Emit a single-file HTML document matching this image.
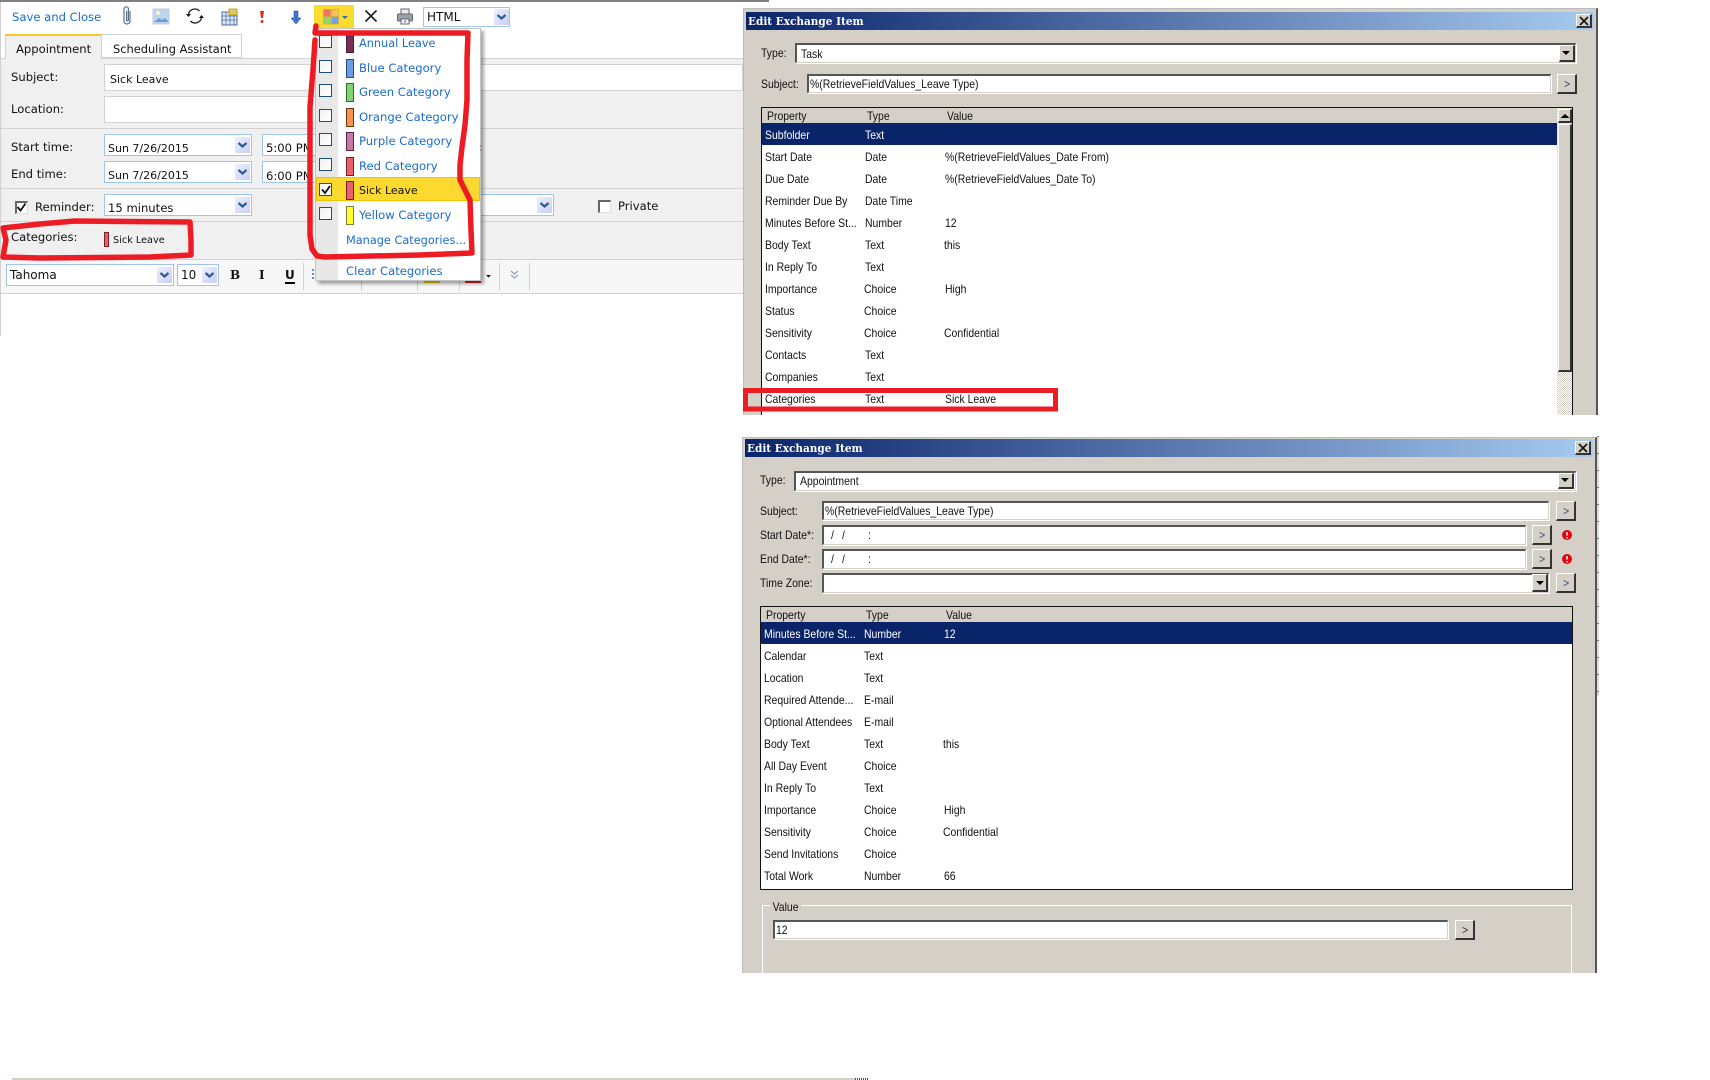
<!DOCTYPE html>
<html><head><meta charset="utf-8"><title>Edit Exchange Item</title>
<style>
html,body{margin:0;padding:0;background:#fff;width:1710px;height:1080px;overflow:hidden}
div,span{position:absolute;box-sizing:border-box}
.o{font:11px/14px "DejaVu Sans","Liberation Sans",sans-serif;color:#111;white-space:nowrap}
.m{font-size:11.6px}
.b{color:#1a6ccc}
.d{font:12px/14px "Liberation Sans",sans-serif;color:#111;white-space:nowrap;transform:scaleX(.87);transform-origin:0 50%}
.w{color:#fff}
.l{background:#d2d2d2;height:1px;left:1px;width:742px}
.c{background:#fff;border:1px solid #9fc5ea}
.cb{background:linear-gradient(135deg,#eef0fd,#c9cef5)}
.in{background:#fff;border-top:2px solid #555;border-left:2px solid #555;border-bottom:1px solid #d4d0c8;border-right:1px solid #d4d0c8;box-shadow:1px 1px 0 #fff}
.btn{background:#d4d0c8;border-top:1px solid #fff;border-left:1px solid #fff;border-right:2px solid #333;border-bottom:2px solid #333}
.dlg{background:#d4d0c8;border-left:1px solid #bbb;border-right:2px solid #555;border-top:1px solid #bbb}
.tb{height:18px;background:linear-gradient(90deg,#0a246a,#a6caf0)}
.tt{font:bold 11.4px/14px "DejaVu Serif","Liberation Serif",serif;color:#fff;white-space:nowrap;transform:scaleX(.92);transform-origin:0 50%}
.cbx{width:13px;height:13px;left:319px;border:1px solid #1f4e79;background:linear-gradient(135deg,#f2f2f2,#fff)}
.sw{left:346px;width:8px;height:19px;border:1px solid}
</style></head><body>

<!-- Outlook form -->
<div style="left:0;top:0;width:769px;height:2px;background:#808080"></div>
<div style="left:0;top:2px;width:1px;height:334px;background:#d0d0d0"></div>
<div style="left:1px;top:59px;width:742px;height:200px;background:#f0f0f0"></div>
<div style="left:1px;top:259px;width:742px;height:34px;background:#f7f7f7"></div>
<div class="l" style="top:58px"></div><div class="l" style="top:128px"></div><div class="l" style="top:188px"></div>
<div class="l" style="top:221px"></div><div class="l" style="top:259px"></div><div class="l" style="top:293px"></div>

<span class="o b m" style="left:12px;top:10px">Save and Close</span>

<div style="left:314px;top:5px;width:40px;height:23px;background:#fbdc2e"></div>

<div class="c" style="left:423px;top:7px;width:87px;height:20px"></div>
<div class="cb" style="left:494px;top:9px;width:15px;height:16px"></div>
<span class="o" style="left:427px;top:10px;font-size:12px">HTML</span>

<!-- tabs -->
<div style="left:5px;top:34px;width:97px;height:25px;background:#f0f0f0;border:1px solid #d2d2d2;border-top:2px solid #fbc72a;border-bottom:0"></div>
<div style="left:102px;top:34px;width:140px;height:24px;background:#fff;border:1px solid #d2d2d2;border-left:0"></div>
<span class="o m" style="left:16px;top:42px">Appointment</span>
<span class="o" style="left:113px;top:42px;font-size:11.4px">Scheduling Assistant</span>

<span class="o m" style="left:11px;top:70px">Subject:</span>
<div style="left:104px;top:64px;width:639px;height:27px;background:#fff;border:1px solid #d2d2d2"></div>
<span class="o" style="left:110px;top:73px">Sick Leave</span>
<span class="o m" style="left:11px;top:102px">Location:</span>
<div style="left:104px;top:96px;width:215px;height:27px;background:#fff;border:1px solid #d2d2d2"></div>

<span class="o m" style="left:11px;top:140px">Start time:</span>
<div class="c" style="left:104px;top:134px;width:148px;height:22px"></div>
<div class="cb" style="left:235px;top:137px;width:15px;height:16px"></div>
<span class="o" style="left:108px;top:142px">Sun 7/26/2015</span>
<div class="c" style="left:262px;top:134px;width:60px;height:22px"></div>
<span class="o m" style="left:266px;top:141px">5:00 PM</span>
<span class="o m" style="left:11px;top:167px">End time:</span>
<div class="c" style="left:104px;top:161px;width:148px;height:22px"></div>
<div class="cb" style="left:235px;top:164px;width:15px;height:16px"></div>
<span class="o" style="left:108px;top:169px">Sun 7/26/2015</span>
<div class="c" style="left:262px;top:161px;width:60px;height:22px"></div>
<span class="o m" style="left:266px;top:169px">6:00 PM</span>

<div style="left:15px;top:201px;width:13px;height:13px;background:#fff;border:2px solid #666;border-right:1px solid #ddd;border-bottom:1px solid #ddd"></div>
<span class="o m" style="left:35px;top:200px">Reminder:</span>
<div class="c" style="left:104px;top:194px;width:148px;height:22px"></div>
<div class="cb" style="left:235px;top:197px;width:15px;height:16px"></div>
<span class="o m" style="left:108px;top:201px">15 minutes</span>
<div class="c" style="left:320px;top:194px;width:234px;height:22px"></div>
<div class="cb" style="left:537px;top:197px;width:15px;height:16px"></div>
<div style="left:598px;top:200px;width:13px;height:13px;background:#fff;border:2px solid #666;border-right:1px solid #ddd;border-bottom:1px solid #ddd"></div>
<span class="o m" style="left:618px;top:199px">Private</span>

<span class="o m" style="left:11px;top:230px">Categories:</span>
<div style="left:104px;top:232px;width:5px;height:15px;background:#e8606a;border:1px solid #7a1f28"></div>
<span class="o" style="left:113px;top:234px;font-size:9.7px">Sick Leave</span>

<div class="c" style="left:6px;top:264px;width:168px;height:22px"></div>
<div class="cb" style="left:157px;top:267px;width:15px;height:16px"></div>
<span class="o" style="left:10px;top:268px;font-size:12px">Tahoma</span>
<div class="c" style="left:177px;top:264px;width:42px;height:22px"></div>
<div class="cb" style="left:202px;top:267px;width:15px;height:16px"></div>
<span class="o" style="left:181px;top:268px;font-size:12px">10</span>
<span class="o" style="left:230px;top:268px;font:bold 12px/14px 'DejaVu Serif',serif">B</span>
<span class="o" style="left:259px;top:268px;font:bold 12px/14px 'DejaVu Serif',serif">I</span>
<span class="o" style="left:285px;top:268px;font:bold 12px/14px 'DejaVu Sans',sans-serif;border-bottom:2px solid #000;height:16px">U</span>
<div style="left:303px;top:263px;width:1px;height:27px;background:#d2d2d2"></div>
<div style="left:361px;top:281px;width:1px;height:10px;background:#d2d2d2"></div>
<div style="left:417px;top:281px;width:1px;height:10px;background:#d2d2d2"></div>
<div style="left:424px;top:281px;width:16px;height:2px;background:#dcc700"></div>
<div style="left:459px;top:281px;width:1px;height:10px;background:#d2d2d2"></div>
<div style="left:465px;top:281px;width:16px;height:2px;background:#d81e1e"></div>
<div style="left:499px;top:263px;width:1px;height:27px;background:#d2d2d2"></div>
<div style="left:529px;top:263px;width:1px;height:27px;background:#d2d2d2"></div>

<!-- menu -->
<div style="left:315px;top:28px;width:166px;height:253px;background:#fff;border:1px solid #c4c4c4;box-shadow:3px 3px 3px rgba(0,0,0,.35)"></div>
<div style="left:316px;top:29px;width:22px;height:251px;background:#e8e8e8"></div>
<div style="left:316px;top:177px;width:164px;height:24px;background:#fcd92e;border:1px solid #eec500"></div>
<div class="cbx" style="top:35px"></div><div class="cbx" style="top:60px"></div><div class="cbx" style="top:84px"></div>
<div class="cbx" style="top:109px"></div><div class="cbx" style="top:133px"></div><div class="cbx" style="top:158px"></div>
<div class="cbx" style="top:183px;background:#fff"></div><div class="cbx" style="top:207px"></div>
<div class="sw" style="top:34px;background:#7b2d5a;border-color:#4a1a36"></div>
<div class="sw" style="top:59px;background:#6f9be0;border-color:#1f4e8c"></div>
<div class="sw" style="top:83px;background:#83d276;border-color:#2a6e22"></div>
<div class="sw" style="top:108px;background:#f59650;border-color:#6e3208"></div>
<div class="sw" style="top:132px;background:#c57aa4;border-color:#5c2348"></div>
<div class="sw" style="top:157px;background:#e8606a;border-color:#7a1f28"></div>
<div class="sw" style="top:181px;background:#e8606a;border-color:#7a1f28"></div>
<div class="sw" style="top:206px;background:#ffff33;border-color:#80802a"></div>
<span class="o b" style="left:359px;top:37px;font-size:11.3px">Annual Leave</span>
<span class="o b m" style="left:359px;top:61px">Blue Category</span>
<span class="o b m" style="left:359px;top:85px">Green Category</span>
<span class="o b m" style="left:359px;top:110px">Orange Category</span>
<span class="o b m" style="left:359px;top:134px">Purple Category</span>
<span class="o b m" style="left:359px;top:159px">Red Category</span>
<span class="o" style="left:359px;top:184px">Sick Leave</span>
<span class="o b m" style="left:359px;top:208px">Yellow Category</span>
<span class="o b" style="left:346px;top:234px;font-size:11.3px">Manage Categories...</span>
<div style="left:346px;top:254px;width:131px;height:1px;background:#d8d8d8"></div>
<span class="o b m" style="left:346px;top:264px">Clear Categories</span>

<!-- Dialog 1 -->
<div class="dlg" style="left:743px;top:8px;width:855px;height:407px"></div>
<div class="tb" style="left:746px;top:12px;width:848px"></div>
<span class="tt" style="left:748px;top:14px">Edit Exchange Item</span>
<div class="btn" style="left:1576px;top:14px;width:16px;height:14px"></div>
<span class="d" style="left:761px;top:46px">Type:</span>
<div class="in" style="left:795px;top:43px;width:781px;height:20px"></div>
<span class="d" style="left:801px;top:47px">Task</span>
<div class="btn" style="left:1559px;top:45px;width:16px;height:17px"></div>
<span class="d" style="left:761px;top:77px">Subject:</span>
<div class="in" style="left:807px;top:74px;width:744px;height:19px"></div>
<span class="d" style="left:810px;top:77px">%(RetrieveFieldValues_Leave Type)</span>
<div class="btn" style="left:1557px;top:74px;width:20px;height:20px"></div>
<span class="d" style="left:1564px;top:77px;color:#2a4a7a">&gt;</span>
<div style="left:761px;top:107px;width:812px;height:308px;background:#fff;border:1px solid #111;border-bottom:0"></div>
<div style="left:762px;top:108px;width:810px;height:15px;background:#d4d0c8"></div>
<div style="left:762px;top:123px;width:795px;height:22px;background:#0a246a"></div>
<span class="d" style="left:767px;top:109px">Property</span><span class="d" style="left:867px;top:109px">Type</span><span class="d" style="left:947px;top:109px">Value</span>
<span class="d w" style="left:765px;top:128px">Subfolder</span><span class="d w" style="left:865px;top:128px">Text</span>
<span class="d" style="left:765px;top:150px">Start Date</span><span class="d" style="left:865px;top:150px">Date</span><span class="d" style="left:945px;top:150px">%(RetrieveFieldValues_Date From)</span>
<span class="d" style="left:765px;top:172px">Due Date</span><span class="d" style="left:865px;top:172px">Date</span><span class="d" style="left:945px;top:172px">%(RetrieveFieldValues_Date To)</span>
<span class="d" style="left:765px;top:194px">Reminder Due By</span><span class="d" style="left:865px;top:194px">Date Time</span>
<span class="d" style="left:765px;top:216px">Minutes Before St...</span><span class="d" style="left:865px;top:216px">Number</span><span class="d" style="left:945px;top:216px">12</span>
<span class="d" style="left:765px;top:238px">Body Text</span><span class="d" style="left:865px;top:238px">Text</span><span class="d" style="left:944px;top:238px">this</span>
<span class="d" style="left:765px;top:260px">In Reply To</span><span class="d" style="left:865px;top:260px">Text</span>
<span class="d" style="left:765px;top:282px">Importance</span><span class="d" style="left:864px;top:282px">Choice</span><span class="d" style="left:945px;top:282px">High</span>
<span class="d" style="left:765px;top:304px">Status</span><span class="d" style="left:864px;top:304px">Choice</span>
<span class="d" style="left:765px;top:326px">Sensitivity</span><span class="d" style="left:864px;top:326px">Choice</span><span class="d" style="left:944px;top:326px">Confidential</span>
<span class="d" style="left:765px;top:348px">Contacts</span><span class="d" style="left:865px;top:348px">Text</span>
<span class="d" style="left:765px;top:370px">Companies</span><span class="d" style="left:865px;top:370px">Text</span>
<span class="d" style="left:765px;top:392px">Categories</span><span class="d" style="left:865px;top:392px">Text</span><span class="d" style="left:945px;top:392px">Sick Leave</span>
<div style="left:1557px;top:108px;width:15px;height:307px;background:repeating-conic-gradient(#d4d0c8 0 25%,#fff 0 50%) 0 0/2px 2px"></div>
<div class="btn" style="left:1558px;top:109px;width:14px;height:14px"></div>
<div class="btn" style="left:1558px;top:124px;width:14px;height:248px"></div>

<!-- Dialog 2 -->
<div class="dlg" style="left:742px;top:437px;width:855px;height:536px"></div>
<div class="tb" style="left:745px;top:439px;width:848px"></div>
<span class="tt" style="left:747px;top:441px">Edit Exchange Item</span>
<div class="btn" style="left:1575px;top:441px;width:16px;height:14px"></div>
<span class="d" style="left:760px;top:473px">Type:</span>
<div class="in" style="left:794px;top:471px;width:782px;height:20px"></div>
<span class="d" style="left:800px;top:474px">Appointment</span>
<div class="btn" style="left:1558px;top:473px;width:16px;height:16px"></div>
<span class="d" style="left:760px;top:504px">Subject:</span>
<div class="in" style="left:822px;top:501px;width:727px;height:19px"></div>
<span class="d" style="left:825px;top:504px">%(RetrieveFieldValues_Leave Type)</span>
<div class="btn" style="left:1556px;top:501px;width:20px;height:20px"></div>
<span class="d" style="left:1563px;top:504px;color:#2a4a7a">&gt;</span>
<span class="d" style="left:760px;top:528px">Start Date*:</span>
<div class="in" style="left:822px;top:525px;width:704px;height:20px"></div>
<span class="d" style="left:831px;top:528px">/</span><span class="d" style="left:842px;top:528px">/</span><span class="d" style="left:868px;top:528px">:</span>
<div class="btn" style="left:1532px;top:525px;width:20px;height:20px"></div>
<span class="d" style="left:1539px;top:528px;color:#2a4a7a">&gt;</span>
<span class="d" style="left:760px;top:552px">End Date*:</span>
<div class="in" style="left:822px;top:549px;width:704px;height:20px"></div>
<span class="d" style="left:831px;top:552px">/</span><span class="d" style="left:842px;top:552px">/</span><span class="d" style="left:868px;top:552px">:</span>
<div class="btn" style="left:1532px;top:549px;width:20px;height:20px"></div>
<span class="d" style="left:1539px;top:552px;color:#2a4a7a">&gt;</span>
<span class="d" style="left:760px;top:576px">Time Zone:</span>
<div class="in" style="left:822px;top:573px;width:727px;height:20px"></div>
<div class="btn" style="left:1532px;top:574px;width:16px;height:18px"></div>
<div class="btn" style="left:1556px;top:573px;width:20px;height:20px"></div>
<span class="d" style="left:1563px;top:576px;color:#2a4a7a">&gt;</span>
<div style="left:760px;top:606px;width:813px;height:284px;background:#fff;border:1px solid #111"></div>
<div style="left:761px;top:607px;width:811px;height:15px;background:#d4d0c8"></div>
<div style="left:761px;top:622px;width:811px;height:22px;background:#0a246a"></div>
<span class="d" style="left:766px;top:608px">Property</span><span class="d" style="left:866px;top:608px">Type</span><span class="d" style="left:946px;top:608px">Value</span>
<span class="d w" style="left:764px;top:627px">Minutes Before St...</span><span class="d w" style="left:864px;top:627px">Number</span><span class="d w" style="left:944px;top:627px">12</span>
<span class="d" style="left:764px;top:649px">Calendar</span><span class="d" style="left:864px;top:649px">Text</span>
<span class="d" style="left:764px;top:671px">Location</span><span class="d" style="left:864px;top:671px">Text</span>
<span class="d" style="left:764px;top:693px">Required Attende...</span><span class="d" style="left:864px;top:693px">E-mail</span>
<span class="d" style="left:764px;top:715px">Optional Attendees</span><span class="d" style="left:864px;top:715px">E-mail</span>
<span class="d" style="left:764px;top:737px">Body Text</span><span class="d" style="left:864px;top:737px">Text</span><span class="d" style="left:943px;top:737px">this</span>
<span class="d" style="left:764px;top:759px">All Day Event</span><span class="d" style="left:864px;top:759px">Choice</span>
<span class="d" style="left:764px;top:781px">In Reply To</span><span class="d" style="left:864px;top:781px">Text</span>
<span class="d" style="left:764px;top:803px">Importance</span><span class="d" style="left:864px;top:803px">Choice</span><span class="d" style="left:944px;top:803px">High</span>
<span class="d" style="left:764px;top:825px">Sensitivity</span><span class="d" style="left:864px;top:825px">Choice</span><span class="d" style="left:943px;top:825px">Confidential</span>
<span class="d" style="left:764px;top:847px">Send Invitations</span><span class="d" style="left:864px;top:847px">Choice</span>
<span class="d" style="left:764px;top:869px">Total Work</span><span class="d" style="left:864px;top:869px">Number</span><span class="d" style="left:944px;top:869px">66</span>
<div style="left:762px;top:905px;width:810px;height:68px;border:1px solid #fff;border-bottom:0;outline:0"></div>
<span class="d" style="left:770px;top:900px;background:#d4d0c8;padding:0 3px">Value</span>
<div class="in" style="left:773px;top:920px;width:675px;height:19px"></div>
<span class="d" style="left:776px;top:923px">12</span>
<div class="btn" style="left:1455px;top:920px;width:20px;height:20px"></div>
<span class="d" style="left:1462px;top:923px;color:#333">&gt;</span>

<div style="left:1597px;top:436px;width:2px;height:260px;background:repeating-linear-gradient(180deg,#777 0 1px,#ddd 1px 17px)"></div>

<div style="left:12px;top:1078px;width:843px;height:2px;background:#d4d0c8"></div>
<div style="left:855px;top:1078px;width:14px;height:2px;background:repeating-linear-gradient(90deg,#555 0 1px,#fff 1px 2px)"></div>

<!-- icons & annotation overlay -->
<svg width="1710" height="1080" style="position:absolute;left:0;top:0" fill="none">
<!-- paperclip -->
<path d="M130 11v10a3 3 0 0 1-6 0V9a2.2 2.2 0 0 1 4.4 0v11a.9.9 0 0 1-1.8 0V11" stroke="#5c6c8c" stroke-width="1.2"/>
<!-- picture -->
<rect x="153" y="9" width="16" height="15" fill="#bcd6ee" stroke="#c4ccd8"/><circle cx="158" cy="13" r="2" fill="#fff3c8"/><path d="M154 22l5-4 3 2 3-2 3 3v1z" fill="#6f9fd0"/>
<!-- refresh -->
<path d="M188.500 14a6.500 6.500 0 0 1 11-3M201.500 18a6.500 6.500 0 0 1-11 3" stroke="#222" stroke-width="1.3"/>
<path d="M186 14h5l-2.500 3zM199 18h5l-2.500-3z" fill="#111"/>
<!-- calendar -->
<rect x="222" y="12" width="15" height="13" fill="#dfe8f6" stroke="#4a6ea8"/><path d="M222 16h15M222 20h15M226 12v13M230 12v13M234 12v13" stroke="#4a6ea8" stroke-width=".8"/>
<rect x="229" y="9" width="8" height="6" fill="#e8c850" stroke="#a88a20" stroke-width=".7"/>
<!-- importance high / low -->
<path d="M260 11h4l-1 7h-2z" fill="#d8301c"/><circle cx="262" cy="21.500" r="1.500" fill="#d8301c"/>
<path d="M294 11h4v7h3l-5 6-5-6h3z" fill="#3f73cf" stroke="#23458a" stroke-width=".5"/>
<!-- categorize -->
<rect x="323.500" y="9.500" width="7" height="7" fill="#f0706a" stroke="#c8a848" stroke-width=".7"/><rect x="331.500" y="9.500" width="7" height="7" fill="#fbc060" stroke="#c8a848" stroke-width=".7"/>
<rect x="323.500" y="17" width="7" height="7" fill="#8fd870" stroke="#c8a848" stroke-width=".7"/><rect x="331.500" y="17" width="7" height="7" fill="#6fa0ea" stroke="#c8a848" stroke-width=".7"/>
<path d="M342 16h6l-3 3z" fill="#3c68b0"/>
<!-- delete -->
<path d="M365.500 10.500l11 11M376.500 10.500l-11 11" stroke="#222" stroke-width="1.700"/>
<!-- print -->
<path d="M401 14v-5h8v5" fill="#e8ecf0" stroke="#666"/><rect x="397.500" y="14" width="15" height="7" rx="1" fill="#9aa0a8" stroke="#666"/><rect x="401" y="19" width="8" height="5" fill="#f2f4f8" stroke="#666"/><circle cx="405" cy="21.500" r="1" fill="#4a88d0"/>
<!-- chevrons -->
<g stroke="#2a5a9a" stroke-width="2.200">
<path d="M497.500 15l4 3.500 4-3.500M238.500 143l4 3.500 4-3.500M238.500 170l4 3.500 4-3.500M238.500 203l4 3.500 4-3.500M540.500 203l4 3.500 4-3.500M160.500 273l4 3.500 4-3.500M205.500 273l4 3.500 4-3.500"/>
</g>
<!-- checks -->
<path d="M17.500 207l3 3.500 5-7" stroke="#111" stroke-width="1.800"/>
<path d="M322 189.500l3 3.500 5-7" stroke="#111" stroke-width="1.800"/>
<!-- toolbar bits -->
<g fill="#3b6bab"><circle cx="313" cy="270" r="1"/><circle cx="313" cy="274" r="1"/><circle cx="313" cy="278" r="1"/><circle cx="481" cy="146" r=".7"/><circle cx="481" cy="150" r=".7"/></g>
<path d="M486 275h5l-2.500 2.500z" fill="#111"/>
<path d="M511 271l3.500 3 3.500-3M511 275l3.500 3 3.500-3" stroke="#8890a8" stroke-width="1.100"/>
<!-- dialog glyphs -->
<g stroke="#111" stroke-width="1.600"><path d="M1580 17l8 8M1588 17l-8 8M1579 444l8 8M1587 444l-8 8"/></g>
<g fill="#000"><path d="M1562 51h8l-4 4zM1561 478h8l-4 4zM1536 581h8l-4 4zM1560.500 118l4.500-4 4.500 4z"/></g>
<g><circle cx="1567" cy="535" r="5" fill="#e4000e"/><circle cx="1567" cy="559" r="5" fill="#e4000e"/>
<path d="M1567 532v3.500M1567 556v3.500" stroke="#fff" stroke-width="1.500"/><path d="M1567 537v1.500M1567 561v1.500" stroke="#fff" stroke-width="1.500"/></g>
<!-- red annotations -->
<g stroke="#ed1c24" stroke-width="5.500" stroke-linejoin="round" stroke-linecap="round">
<path d="M316 26L315 33L468 33L467 60L467 100L465 125L462 147L460 165L460 180L465 190L470 200L471 230L472 253L420 255L325 257L317 256L312 249L310 235L310 180L310 107L313 70L315 40"/>
<path d="M3 228L40 224L75 221L190 222L191 240L191 255L150 257L40 258L3 257L6 240Z"/>
</g>
<rect x="745.500" y="390.500" width="310" height="18.500" stroke="#ed1c24" stroke-width="5"/>
</svg>
</body></html>
